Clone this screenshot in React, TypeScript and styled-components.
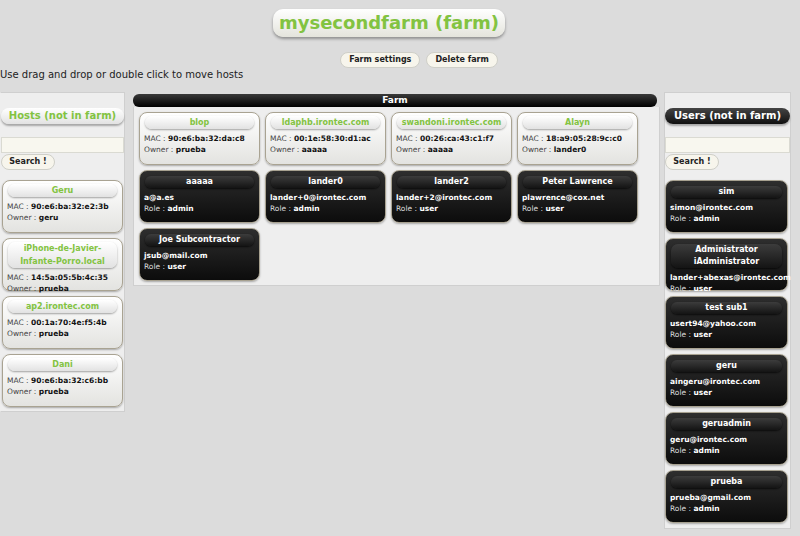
import React from 'react';
import styled, {createGlobalStyle} from 'styled-components';

const GlobalStyle = createGlobalStyle`
    html, body {
        margin: 0;
        padding: 0;
        background: #dcdcdc;
    }
    body {
        font-family: "DejaVu Sans", Verdana, sans-serif;
        font-size: 10px;
        color: #222;
    }
    * {
        box-sizing: border-box;
    }
`

const GREEN = '#82c341';

const Page = styled.div`
    width: 800px;
    height: 536px;
    overflow: hidden;
`

const TitleRow = styled.div`
    display: flex;
    justify-content: center;
    padding: 9px 22px 0 0;
`

const Title = styled.h1`
    margin: 0;
    height: 28px;
    padding: 0 6px;
    line-height: 28px;
    font-size: 18px;
    font-weight: bold;
    color: ${GREEN};
    border-radius: 10px;
    background: linear-gradient(#ffffff, #e4e4dc);
    box-shadow: 0 2px 3px rgba(0, 0, 0, .35);
`

const ActionRow = styled.div`
    display: flex;
    justify-content: center;
    gap: 6px;
    margin-top: 15px;
    padding-left: 38px;
`

const PillButton = styled.button`
    height: 16px;
    padding: 0 8px;
    font-family: inherit;
    font-size: 8px;
    font-weight: bold;
    line-height: 14px;
    color: #222;
    background: #f7f5ec;
    border: 1px solid #cfcfc8;
    border-radius: 8px;
`

const Hint = styled.div`
    line-height: 13px;
    font-size: 10px;
    color: #222;
`

const Board = styled.div`
    display: flex;
    align-items: flex-start;
    margin-top: 11px;
`

const SidePanel = styled.div<{ $right?: boolean }>`
    width: ${({$right}) => $right ? '127px' : '125px'};
    margin-left: ${({$right}) => $right ? '4px' : '0'};
    padding: 15px 0 ${({$right}) => $right ? '5px' : '4px'};
    background: #eeeeee;
    border: 1px solid #cfcfcf;
    border-left-color: ${({$right}) => $right ? '#cfcfcf' : 'transparent'};
`

const PanelHeader = styled.div<{ $dark?: boolean }>`
    height: 16px;
    line-height: 16px;
    text-align: center;
    font-size: 10px;
    font-weight: bold;
    border-radius: 8px;
    color: ${({$dark}) => $dark ? '#fff' : GREEN};
    background: ${({$dark}) => $dark ? 'linear-gradient(#444, #111)' : 'linear-gradient(#ffffff, #e2e2e2)'};
    box-shadow: 0 2px 2px rgba(0, 0, 0, .3);
`

const SearchInput = styled.input`
    display: block;
    width: 100%;
    height: 16px;
    margin-top: 13px;
    background: #f8f7ef;
    border: 1px solid #dadad2;
`

const SearchButton = styled(PillButton)`
    display: block;
    width: 54px;
    padding: 0;
    margin-top: 1px;
`

const CardStack = styled.div<{ $right?: boolean }>`
    display: flex;
    flex-direction: column;
    gap: 5px;
    margin: 10px 0 0 ${({$right}) => $right ? '0' : '1px'};
`

const FarmColumn = styled.div`
    width: 527px;
    margin: 2px 0 0 8px;
`

const FarmBar = styled.div`
    width: 524px;
    height: 13px;
    line-height: 13px;
    text-align: center;
    font-size: 9px;
    font-weight: bold;
    color: #fff;
    border-radius: 6px;
    background: linear-gradient(#3a3a3a, #000);
`

const FarmBody = styled.div`
    display: flex;
    flex-wrap: wrap;
    align-content: flex-start;
    gap: 5px;
    padding: 5px 5px 4px;
    background: #eeeeee;
    border: 1px solid #cfcfcf;
    border-top: none;
`

const Card = styled.div<{ $dark?: boolean; $w: number }>`
    width: ${({$w}) => $w}px;
    height: 53px;
    flex: none;
    border-radius: 8px;
    border: 1px solid ${({$dark}) => $dark ? '#a7a190' : '#a9a392'};
    background: ${({$dark}) => $dark ? 'linear-gradient(#2e2e2e, #0c0c0c)' : 'linear-gradient(#ffffff, #e3e3e0)'};
    box-shadow: 0 1px 2px rgba(0, 0, 0, .3);
`

const CardTitle = styled.div<{ $dark?: boolean }>`
    margin: ${({$dark}) => $dark ? '5px 5px 0' : '3px 5px 0'};
    padding: 0 3px;
    line-height: ${({$dark}) => $dark ? '12px' : '13px'};
    text-align: center;
    font-size: 8px;
    font-weight: bold;
    border-radius: 7px;
    color: ${({$dark}) => $dark ? '#fff' : GREEN};
    background: ${({$dark}) => $dark ? 'linear-gradient(#3c3c3c, #141414)' : 'linear-gradient(#ffffff, #e2e2e2)'};
    box-shadow: 0 1px 2px rgba(0, 0, 0, ${({$dark}) => $dark ? '.7' : '.35'});
`

const CardBody = styled.div<{ $dark?: boolean }>`
    padding: 4px 0 0 4px;
    font-size: 7.5px;
    line-height: 11px;
    white-space: nowrap;
    color: ${({$dark}) => $dark ? '#ddd' : '#444'};

    b {
        color: ${({$dark}) => $dark ? '#fff' : '#111'};
    }
`

type Host = { name: string; mac: string; owner: string };
type User = { name: string; email: string; role: string };

const HostCard = ({host, w}: { host: Host; w: number }) => (
    <Card $w={w}>
        <CardTitle>{host.name}</CardTitle>
        <CardBody>
            <div>MAC : <b>{host.mac}</b></div>
            <div>Owner : <b>{host.owner}</b></div>
        </CardBody>
    </Card>
)

const UserCard = ({user, w}: { user: User; w: number }) => (
    <Card $dark $w={w}>
        <CardTitle $dark>{user.name}</CardTitle>
        <CardBody $dark>
            <div><b>{user.email}</b></div>
            <div>Role : <b>{user.role}</b></div>
        </CardBody>
    </Card>
)

const farmHosts: Host[] = [
    {name: 'blop', mac: '90:e6:ba:32:da:c8', owner: 'prueba'},
    {name: 'ldaphb.irontec.com', mac: '00:1e:58:30:d1:ac', owner: 'aaaaa'},
    {name: 'swandoni.irontec.com', mac: '00:26:ca:43:c1:f7', owner: 'aaaaa'},
    {name: 'Alayn', mac: '18:a9:05:28:9c:c0', owner: 'lander0'},
];

const farmUsers: User[] = [
    {name: 'aaaaa', email: 'a@a.es', role: 'admin'},
    {name: 'lander0', email: 'lander+0@irontec.com', role: 'admin'},
    {name: 'lander2', email: 'lander+2@irontec.com', role: 'user'},
    {name: 'Peter Lawrence', email: 'plawrence@cox.net', role: 'user'},
    {name: 'Joe Subcontractor', email: 'jsub@mail.com', role: 'user'},
];

const freeHosts: Host[] = [
    {name: 'Geru', mac: '90:e6:ba:32:e2:3b', owner: 'geru'},
    {name: 'iPhone-de-Javier-Infante-Porro.local', mac: '14:5a:05:5b:4c:35', owner: 'prueba'},
    {name: 'ap2.irontec.com', mac: '00:1a:70:4e:f5:4b', owner: 'prueba'},
    {name: 'Dani', mac: '90:e6:ba:32:c6:bb', owner: 'prueba'},
];

const freeUsers: User[] = [
    {name: 'sim', email: 'simon@irontec.com', role: 'admin'},
    {name: 'Administrator iAdministrator', email: 'lander+abexas@irontec.com', role: 'user'},
    {name: 'test sub1', email: 'usert94@yahoo.com', role: 'user'},
    {name: 'geru', email: 'aingeru@irontec.com', role: 'user'},
    {name: 'geruadmin', email: 'geru@irontec.com', role: 'admin'},
    {name: 'prueba', email: 'prueba@gmail.com', role: 'admin'},
];

const App: React.FC = () => {
    return (
        <Page>
            <GlobalStyle/>
            <TitleRow>
                <Title>mysecondfarm (farm)</Title>
            </TitleRow>
            <ActionRow>
                <PillButton>Farm settings</PillButton>
                <PillButton>Delete farm</PillButton>
            </ActionRow>
            <Hint>Use drag and drop or double click to move hosts</Hint>
            <Board>
                <SidePanel>
                    <PanelHeader>Hosts (not in farm)</PanelHeader>
                    <SearchInput/>
                    <SearchButton>Search !</SearchButton>
                    <CardStack>
                        {freeHosts.map(h => <HostCard key={h.name} host={h} w={121}/>)}
                    </CardStack>
                </SidePanel>
                <FarmColumn>
                    <FarmBar>Farm</FarmBar>
                    <FarmBody>
                        {farmHosts.map(h => <HostCard key={h.name} host={h} w={121}/>)}
                        {farmUsers.map(u => <UserCard key={u.name} user={u} w={121}/>)}
                    </FarmBody>
                </FarmColumn>
                <SidePanel $right>
                    <PanelHeader $dark>Users (not in farm)</PanelHeader>
                    <SearchInput/>
                    <SearchButton>Search !</SearchButton>
                    <CardStack $right>
                        {freeUsers.map(u => <UserCard key={u.name} user={u} w={123}/>)}
                    </CardStack>
                </SidePanel>
            </Board>
        </Page>
    )
};

export default App;
